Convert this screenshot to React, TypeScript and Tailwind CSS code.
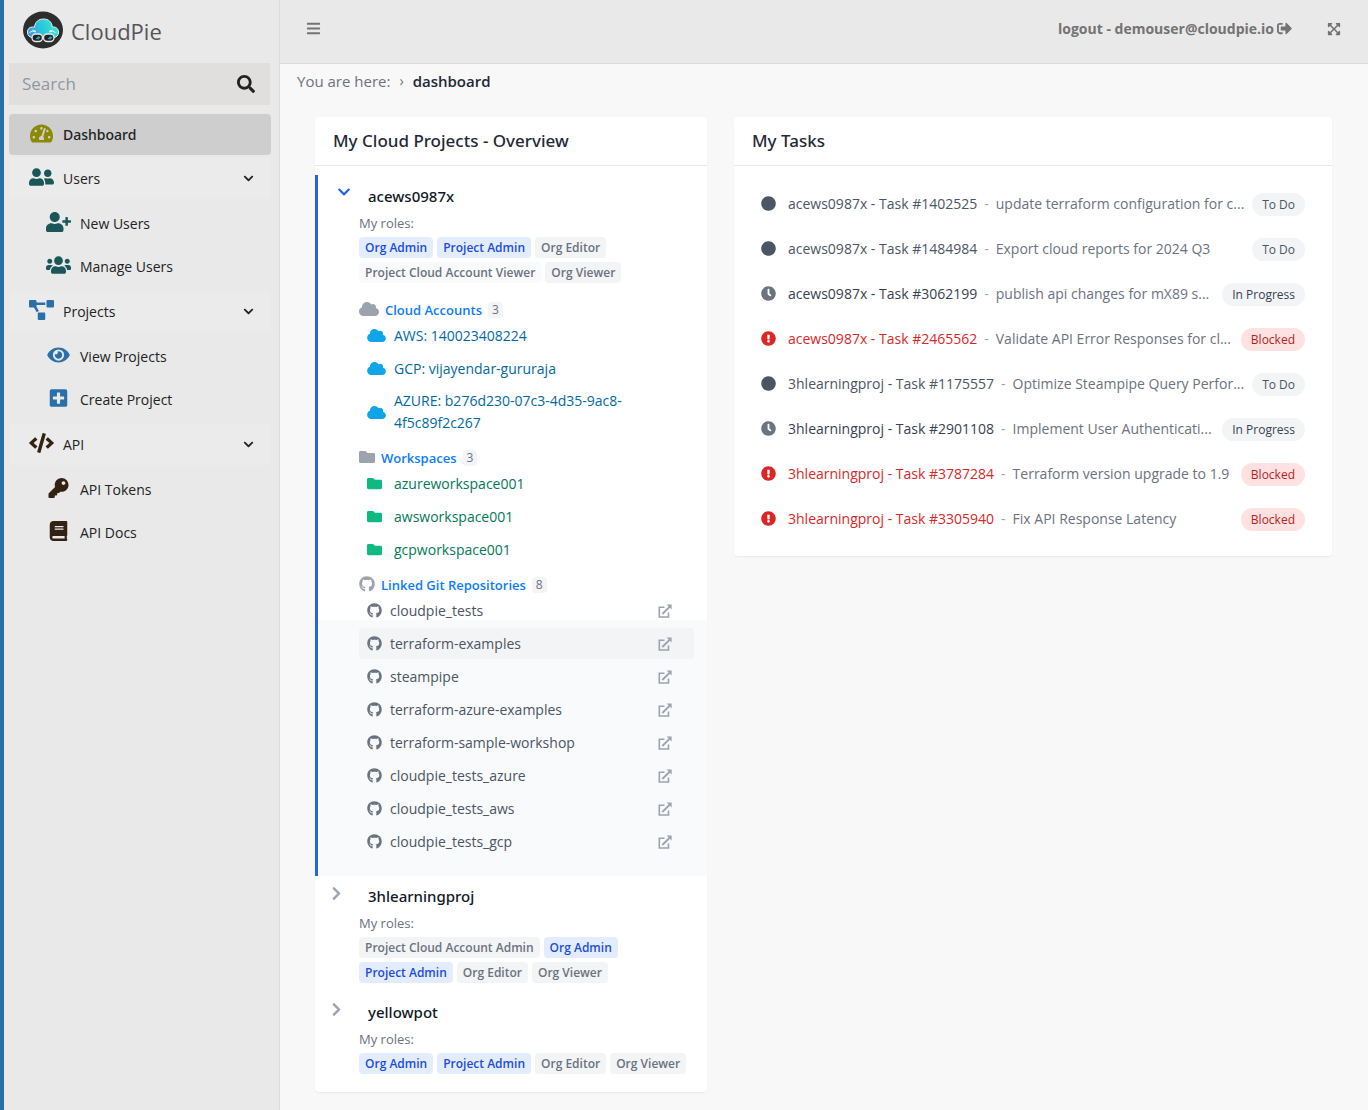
import React from "react";
import {
  FaBars,
  FaBook,
  FaChevronDown,
  FaChevronRight,
  FaCircle,
  FaClock,
  FaCloud,
  FaCode,
  FaExclamationCircle,
  FaExpandArrowsAlt,
  FaEye,
  FaFolder,
  FaGithub,
  FaKey,
  FaPlusSquare,
  FaProjectDiagram,
  FaSearch,
  FaSignOutAlt,
  FaTachometerAlt,
  FaUserFriends,
  FaUserPlus,
  FaUsers,
} from "react-icons/fa";
import type { IconType } from "react-icons";

type NavLink = { label: string; icon: IconType };
type NavGroup = { label: string; icon: IconType; color: string; items: NavLink[] };

const navGroups: NavGroup[] = [
  {
    label: "Users",
    icon: FaUserFriends,
    color: "text-[#1b5659]",
    items: [
      { label: "New Users", icon: FaUserPlus },
      { label: "Manage Users", icon: FaUsers },
    ],
  },
  {
    label: "Projects",
    icon: FaProjectDiagram,
    color: "text-[#296fa8]",
    items: [
      { label: "View Projects", icon: FaEye },
      { label: "Create Project", icon: FaPlusSquare },
    ],
  },
  {
    label: "API",
    icon: FaCode,
    color: "text-[#332211]",
    items: [
      { label: "API Tokens", icon: FaKey },
      { label: "API Docs", icon: FaBook },
    ],
  },
];

type Role = { name: string; tone: "blue" | "gray" | "pale" };
const roleTone = {
  blue: "bg-[#e4edff] text-[#1d4ed8]",
  gray: "bg-gray-100 text-[#6b7280]",
  pale: "bg-gray-50 text-[#6b7280]",
};

const tasks = [
  { project: "acews0987x", id: "1402525", text: "update terraform configuration for c...", status: "To Do" },
  { project: "acews0987x", id: "1484984", text: "Export cloud reports for 2024 Q3", status: "To Do" },
  { project: "acews0987x", id: "3062199", text: "publish api changes for mX89 s...", status: "In Progress" },
  { project: "acews0987x", id: "2465562", text: "Validate API Error Responses for cl...", status: "Blocked" },
  { project: "3hlearningproj", id: "1175557", text: "Optimize Steampipe Query Perfor...", status: "To Do" },
  { project: "3hlearningproj", id: "2901108", text: "Implement User Authenticati...", status: "In Progress" },
  { project: "3hlearningproj", id: "3787284", text: "Terraform version upgrade to 1.9", status: "Blocked" },
  { project: "3hlearningproj", id: "3305940", text: "Fix API Response Latency", status: "Blocked" },
] as const;

const taskStyle = {
  "To Do": { icon: FaCircle, iconColor: "text-[#4b5563]", text: "text-[#4b5563]", badge: "bg-gray-100 text-[#4b5563]" },
  "In Progress": { icon: FaClock, iconColor: "text-[#6b7280]", text: "text-[#374151]", badge: "bg-gray-100 text-[#374151]" },
  Blocked: { icon: FaExclamationCircle, iconColor: "text-[#dc2626]", text: "text-[#dc2626]", badge: "bg-[#fee2e2] text-[#b91c1c]" },
};

const repos = [
  "cloudpie_tests",
  "terraform-examples",
  "steampipe",
  "terraform-azure-examples",
  "terraform-sample-workshop",
  "cloudpie_tests_azure",
  "cloudpie_tests_aws",
  "cloudpie_tests_gcp",
];

function Logo() {
  return (
    <svg viewBox="0 0 40 38" className="mb-1 h-[38px] w-10" aria-hidden="true">
      <defs>
        <linearGradient id="cloud" x1="0" y1="0.6" x2="1" y2="0.3">
          <stop offset="0" stopColor="#3b9be0" />
          <stop offset="0.45" stopColor="#2cc5dc" />
          <stop offset="1" stopColor="#35f0cf" />
        </linearGradient>
      </defs>
      <ellipse cx="20" cy="19" rx="20" ry="18.5" fill="#2d2d2d" />
      <path
        d="M10 26.500C6.500 26.500 4.500 24.500 4.500 21C4.500 18 6.500 16 9.500 16C10 16 11 16 11.500 16.200C12 11 15.500 8 20.500 8C25.500 8 29 11 29.300 16C32.500 15.500 35.500 17.500 35.500 21C35.500 24.500 33.500 26.500 30.500 26.500Z"
        fill="url(#cloud)"
        stroke="#e8f4f4"
      />
      <path d="M6.500 21.500q3-2.500 6-.5M9.500 19l3.500 1.500M26.500 21q3-2 6 .5M26 20.500l3.500-1.500" fill="none" stroke="#e8f4f4" />
      <rect x="9" y="23" width="10.500" height="7.500" rx="3.700" fill="#222" stroke="#e8e8e8" strokeWidth="1.300" />
      <rect x="20.500" y="23" width="10.500" height="7.500" rx="3.700" fill="#222" stroke="#e8e8e8" strokeWidth="1.300" />
      <path d="M12.500 28l3-3 2 1.500-2 2zM24.500 28l3-3 2 1.500-2 2z" fill="#25a3b4" />
    </svg>
  );
}

function ExternalLink() {
  return (
    <svg viewBox="0 0 14 14" className="ml-auto h-[14px] w-[14px] text-[#9ca3af]" fill="none" stroke="currentColor" aria-hidden="true">
      <path d="M6.500 3.300H1.300V13H10.500V8.500" strokeWidth="1.600" />
      <path d="M4.300 10L11.500 2.800" strokeWidth="1.900" />
      <path d="M8.600 0.500H13.600V5.500Z" fill="currentColor" stroke="none" />
    </svg>
  );
}

function Sidebar() {
  return (
    <aside className="w-[280px] shrink-0 border-r border-l-4 border-r-[#dcdcdc] border-l-[#296fa8] bg-[#e9e9e9] pr-2 pl-[5px]">
      <a href="#home" className="flex h-[63px] items-center gap-2 pl-[14px] text-[22px] text-[#555]">
        <Logo />
        <span>CloudPie</span>
      </a>
      <form className="mr-px flex h-[42px] items-center bg-[#e0dfde] pr-[15px] pl-[13px]">
        <input
          type="search"
          aria-label="Search"
          placeholder="Search"
          className="min-w-0 flex-1 bg-transparent text-[17px] outline-none placeholder:text-[#8f989f]"
        />
        <button type="button" aria-label="Search" className="text-[18px] text-[#222]">
          <FaSearch />
        </button>
      </form>
      <nav className="mt-[9px] text-sm text-[#222]">
        <a href="#dashboard" className="flex h-[41px] items-center rounded bg-[#cecece] font-['Noto_Sans',sans-serif] font-medium">
          <span className="flex w-[54px] justify-center pb-0.5 pl-2.5 text-[23px] text-[#8c8a00]">
            <FaTachometerAlt />
          </span>
          Dashboard
        </a>
        {navGroups.map(({ label, icon: Icon, color, items }) => (
          <div key={label} className="pt-[3px]">
            <button type="button" className="flex h-[41px] w-full items-center rounded bg-[#ebebeb]">
              <span className={`flex w-[54px] justify-center pb-1 pl-2.5 ${color}`}>
                <Icon className="h-5 w-[25px]" />
              </span>
              {label}
              <FaChevronDown className="mr-[17px] ml-auto text-[11px]" />
            </button>
            <ul className="pt-[3px]">
              {items.map(({ label: text, icon: ItemIcon }) => (
                <li key={text}>
                  <a href={`#${text}`} className="flex h-[43px] items-center">
                    <span className={`flex w-[71px] justify-center pb-1 pl-[27px] ${color}`}>
                      <ItemIcon className="h-5 w-[25px]" />
                    </span>
                    {text}
                  </a>
                </li>
              ))}
            </ul>
          </div>
        ))}
      </nav>
    </aside>
  );
}

function Roles({ roles }: { roles: Role[] }) {
  return (
    <>
      <p className="mt-[5px] text-[13px] leading-5 text-[#6b7280]">My roles:</p>
      <ul className="mt-1 flex flex-wrap gap-1">
        {roles.map((r) => (
          <li key={r.name} className={`h-[21px] rounded px-1.5 text-xs leading-[21px] font-semibold ${roleTone[r.tone]}`}>
            {r.name}
          </li>
        ))}
      </ul>
    </>
  );
}

function Project({ name, roles, open, children }: { name: string; roles: Role[]; open?: boolean; children?: React.ReactNode }) {
  return (
    <section
      className={
        open
          ? "flex border-l-3 border-[#2563eb] bg-[linear-gradient(to_top,#f9fafb_256px,#ffffff_256px)] pt-[9px] pr-[13px] pb-[19px]"
          : "flex pt-2 pr-[13px] pb-[9px]"
      }
    >
      <button
        type="button"
        aria-label={`Toggle ${name}`}
        aria-expanded={!!open}
        className={
          open
            ? "flex w-[41px] shrink-0 items-start pt-px pl-[19px] text-[#2563eb]"
            : "flex w-11 shrink-0 items-start pt-0.5 pl-4 text-[#9ca3af]"
        }
      >
        {open ? <FaChevronDown className="h-[14px] w-[14px]" /> : <FaChevronRight className="h-[15px] w-[11px]" />}
      </button>
      <div className="min-w-0 flex-1">
        <h3 className="pl-[9px] font-['Noto_Sans',sans-serif] text-[15px] leading-6 font-medium text-[#111827]">{name}</h3>
        <Roles roles={roles} />
        {children}
      </div>
    </section>
  );
}

function Group({ title, count, icon: Icon, iconClass, children }: { title: string; count: number; icon: IconType; iconClass: string; children: React.ReactNode }) {
  return (
    <section>
      <h4 className="flex h-[21px] items-center pt-0.5 text-[13px] font-semibold text-[#0d7bff]">
        <Icon className={`mb-1 text-[#9ca3af] ${iconClass}`} />
        {title}
        <span className="mb-0.5 ml-1.5 h-4 rounded bg-gray-100 px-1 text-xs leading-4 font-medium text-[#6b7280]">{count}</span>
      </h4>
      <ul className="flex flex-col gap-0.5">{children}</ul>
    </section>
  );
}

function Row({ href, className, children }: { href: string; className: string; children: React.ReactNode }) {
  return (
    <li>
      <a href={href} className={`flex min-h-[31px] items-center rounded py-1 pr-[22px] pl-2 text-sm leading-[22px] ${className}`}>
        {children}
      </a>
    </li>
  );
}

function Card({ title, children }: { title: string; children: React.ReactNode }) {
  return (
    <section className="min-w-0 overflow-hidden rounded bg-white shadow-[0_1px_2px_rgba(0,0,0,0.06)]">
      <h2 className="border-b border-gray-200 px-[18px] font-['Noto_Sans',sans-serif] text-[17px] leading-[48px] font-medium text-[#1f2937]">{title}</h2>
      {children}
    </section>
  );
}

function TaskList() {
  return (
    <ul className="px-[27px] py-[15px]">
      {tasks.map((t) => {
        const s = taskStyle[t.status];
        const Icon = s.icon;
        return (
          <li key={t.id} className="flex h-[45px] items-center text-sm">
            <Icon className={`mr-3 h-[15px] w-[15px] shrink-0 ${s.iconColor}`} />
            <a href={`#${t.id}`} className={`shrink-0 ${s.text}`}>
              {t.project} - Task #{t.id}
            </a>
            <span className="mx-[7px] text-[#9ca3af]">-</span>
            <span className="mr-auto whitespace-nowrap text-[#6b7280]">{t.text}</span>
            <span className={`mt-0.5 ml-1 h-[23px] shrink-0 rounded-full px-2.5 text-xs leading-[23px] ${s.badge}`}>{t.status}</span>
          </li>
        );
      })}
    </ul>
  );
}

export default function App() {
  return (
    <div className="flex min-h-screen bg-[#f8f8f8] font-['Open_Sans','Noto_Sans',sans-serif]">
      <Sidebar />
      <div className="min-w-0 flex-1">
        <header className="flex h-16 items-center border-b border-[#dcdcdc] bg-[#e9e9e9] pr-[27px] pb-1.5 pl-[26px] text-[#737373]">
          <button type="button" aria-label="Menu" className="text-[15px]">
            <FaBars />
          </button>
          <a href="#logout" className="ml-auto flex items-center gap-[3px] text-sm font-bold">
            logout - demouser@cloudpie.io <FaSignOutAlt className="text-[15px]" />
          </a>
          <button type="button" aria-label="Full screen" className="ml-[35px] text-[14px]">
            <FaExpandArrowsAlt />
          </button>
        </header>
        <nav aria-label="Breadcrumb" className="flex h-[34px] items-center gap-[9px] pl-[17px] text-[15px] text-[#6b7280]">
          You are here: <span className="text-sm">›</span>
          <a href="#dashboard" className="font-semibold text-[#1f2937]">dashboard</a>
        </nav>
        <main className="grid grid-cols-[392fr_598fr] items-start gap-[27px] pt-[19px] pr-9 pb-[18px] pl-[35px]">
          <Card title="My Cloud Projects - Overview">
            <div className="py-[9px]">
              <Project
                name="acews0987x"
                open
                roles={[
                  { name: "Org Admin", tone: "blue" },
                  { name: "Project Admin", tone: "blue" },
                  { name: "Org Editor", tone: "gray" },
                  { name: "Project Cloud Account Viewer", tone: "pale" },
                  { name: "Org Viewer", tone: "gray" },
                ]}
              >
                <div className="flex flex-col gap-[9px] pt-4">
                  <Group title="Cloud Accounts" count={3} icon={FaCloud} iconClass="mr-1.5 h-4 w-5">
                    {["AWS: 140023408224", "GCP: vijayendar-gururaja", "AZURE: b276d230-07c3-4d35-9ac8-4f5c89f2c267"].map((a) => (
                      <Row key={a} href="#account" className="text-[#0369a1]">
                        <FaCloud className="mr-2 h-[15px] w-[19px] shrink-0 text-[#0ea5e9]" />
                        <span className="max-w-[250px]">{a}</span>
                      </Row>
                    ))}
                  </Group>
                  <Group title="Workspaces" count={3} icon={FaFolder} iconClass="mr-1.5 h-4 w-4">
                    {["azureworkspace001", "awsworkspace001", "gcpworkspace001"].map((w) => (
                      <Row key={w} href="#workspace" className="text-[#047857]">
                        <FaFolder className="mr-3 h-[15px] w-[15px] text-[#10b981]" />
                        {w}
                      </Row>
                    ))}
                  </Group>
                  <Group title="Linked Git Repositories" count={8} icon={FaGithub} iconClass="mr-1.5 h-4 w-4">
                    {repos.map((r) => (
                      <Row key={r} href="#repo" className={r === "terraform-examples" ? "bg-gray-100 text-[#4b5563]" : "text-[#4b5563]"}>
                        <FaGithub className="mr-2 h-[15px] w-[15px] text-[#6b7280]" />
                        {r}
                        <ExternalLink />
                      </Row>
                    ))}
                  </Group>
                </div>
              </Project>
              <Project
                name="3hlearningproj"
                roles={[
                  { name: "Project Cloud Account Admin", tone: "gray" },
                  { name: "Org Admin", tone: "blue" },
                  { name: "Project Admin", tone: "blue" },
                  { name: "Org Editor", tone: "gray" },
                  { name: "Org Viewer", tone: "gray" },
                ]}
              />
              <Project
                name="yellowpot"
                roles={[
                  { name: "Org Admin", tone: "blue" },
                  { name: "Project Admin", tone: "blue" },
                  { name: "Org Editor", tone: "gray" },
                  { name: "Org Viewer", tone: "gray" },
                ]}
              />
            </div>
          </Card>
          <Card title="My Tasks">
            <TaskList />
          </Card>
        </main>
      </div>
    </div>
  );
}
